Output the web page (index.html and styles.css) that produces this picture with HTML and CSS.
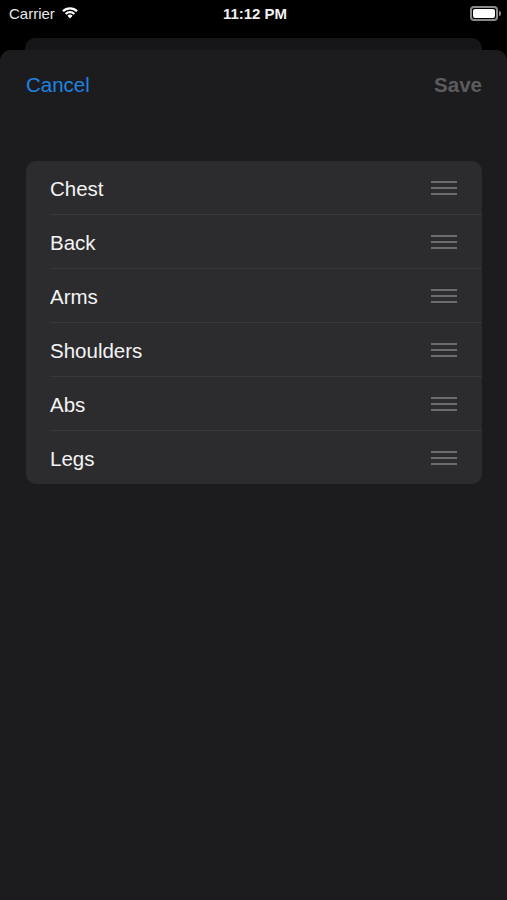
FILE: index.html
```html
<!DOCTYPE html>
<html lang="en">
<head>
    <meta charset="UTF-8">
    <meta name="viewport" content="width=device-width, initial-scale=1.0">
    <title>Reorder Muscle Groups</title>
    <link rel="stylesheet" href="styles.css">
</head>
<body>
    <div class="status-bar">
        <div class="status-left">
            <span class="carrier">Carrier</span>
            <svg class="wifi" width="18" height="13" viewBox="0 0 18 13">
                <path d="M9 12.6 L6.4 9.8 A3.8 3.8 0 0 1 11.6 9.8 Z" fill="#fff"/>
                <path d="M3.9 7.2 A7.3 7.3 0 0 1 14.1 7.2 L12.6 8.8 A5.2 5.2 0 0 0 5.4 8.8 Z" fill="#fff"/>
                <path d="M1.2 4.4 A11.2 11.2 0 0 1 16.8 4.4 L15.3 6 A9 9 0 0 0 2.7 6 Z" fill="#fff"/>
            </svg>
        </div>
        <div class="status-time">11:12 PM</div>
        <div class="status-right">
            <div class="battery"><div class="battery-fill"></div></div>
            <div class="battery-nub"></div>
        </div>
    </div>

    <div class="back-card"></div>

    <div class="sheet">
        <div class="nav">
            <span class="nav-cancel">Cancel</span>
            <span class="nav-save">Save</span>
        </div>

        <ul class="group-list">
            <li class="group-row"><span>Chest</span><i class="handle"></i></li>
            <li class="group-row"><span>Back</span><i class="handle"></i></li>
            <li class="group-row"><span>Arms</span><i class="handle"></i></li>
            <li class="group-row"><span>Shoulders</span><i class="handle"></i></li>
            <li class="group-row"><span>Abs</span><i class="handle"></i></li>
            <li class="group-row"><span>Legs</span><i class="handle"></i></li>
        </ul>
    </div>
</body>
</html>
```

FILE: styles.css
```css
html, body {
    height: 100%;
}
body {
    margin: 0;
    background-color: #000;
    font-family: "Liberation Sans", Arial, sans-serif;
    color: #fff;
    overflow: hidden;
}
.status-bar {
    height: 27px;
    display: flex;
    align-items: center;
    justify-content: space-between;
    padding: 0 6px 0 9px;
}
.status-left {
    display: flex;
    align-items: center;
    gap: 6px;
    width: 120px;
}
.carrier {
    font-size: 15px;
    color: #e8e8e8;
}
.wifi {
    margin-top: -3px;
}
.status-time {
    font-size: 15px;
    font-weight: bold;
    color: #f2f2f2;
}
.status-right {
    width: 120px;
    display: flex;
    justify-content: flex-end;
    align-items: center;
}
.battery {
    width: 22px;
    height: 9px;
    border: 2px solid #8a8a8a;
    border-radius: 4px;
    padding: 1px;
}
.battery-fill {
    width: 100%;
    height: 100%;
    background-color: #fff;
    border-radius: 2px;
}
.battery-nub {
    width: 2px;
    height: 5px;
    background-color: #8a8a8a;
    border-radius: 0 2px 2px 0;
    margin-left: 1px;
}
.back-card {
    margin: 11px 25px 0;
    height: 20px;
    background-color: #161618;
    border-radius: 10px 10px 0 0;
}
.sheet {
    margin-top: -8px;
    height: 860px;
    background-color: #1c1c1e;
    border-radius: 11px 11px 0 0;
}
.nav {
    display: flex;
    justify-content: space-between;
    align-items: center;
    padding: 25px 25px 0 26px;
    height: 20px;
    font-size: 20.5px;
}
.nav-cancel {
    color: #1c84e2;
}
.nav-save {
    color: #5c5c5f;
    font-weight: bold;
}
.group-list {
    list-style: none;
    margin: 66px 25px 0 26px;
    padding: 0;
    background-color: #2c2c2e;
    border-radius: 10px;
    overflow: hidden;
}
.group-row {
    height: 53px;
    margin-left: 24px;
    padding-right: 25px;
    display: flex;
    align-items: center;
    justify-content: space-between;
    font-size: 20.5px;
    color: #f4f4f4;
    border-top: 1px solid #38383a;
}
.group-row span {
    padding-top: 2px;
}
.group-row:first-child {
    border-top: none;
}
.handle {
    width: 26px;
    height: 14px;
    background: linear-gradient(#6c6c6f, #6c6c6f) 0 0 / 100% 2px no-repeat,
                linear-gradient(#6c6c6f, #6c6c6f) 0 6px / 100% 2px no-repeat,
                linear-gradient(#6c6c6f, #6c6c6f) 0 12px / 100% 2px no-repeat;
}
```
